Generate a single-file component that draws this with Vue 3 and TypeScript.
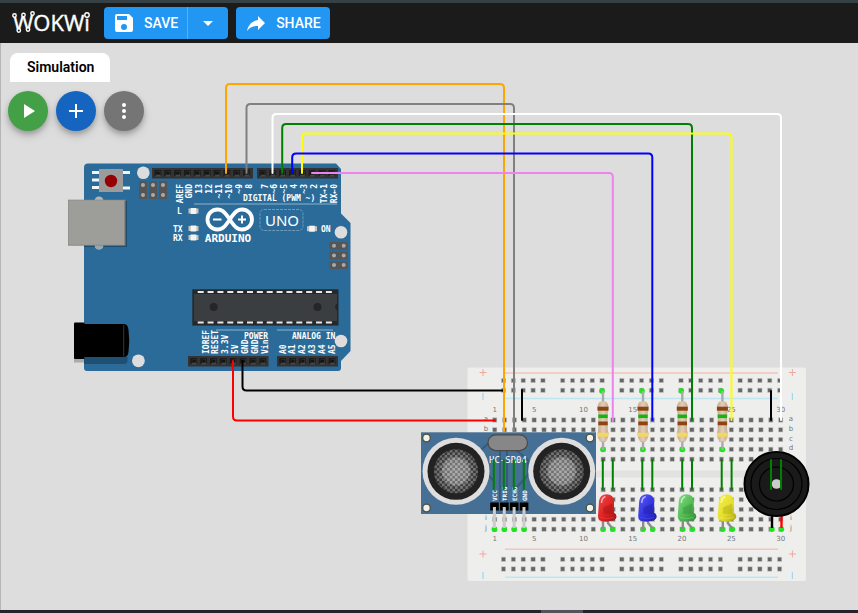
<script setup lang="ts">
type Point = [number, number]

interface Wire {
  color: string
  points: Point[]
}

interface PinLabel {
  text: string
  x: number
}

interface Led {
  id: string
  x: number
  light: string
  base: string
  dark: string
}

const PITCH = 9.86

const steps = (start: number, count: number, pitch: number = PITCH): number[] =>
  Array.from({ length: count }, (_, i) => start + i * pitch)

const labels = (names: string[], start: number): PinLabel[] =>
  names.map((text, i) => ({ text, x: start + i * PITCH }))

/** Polyline with softened corners. */
function wirePath(points: Point[], r = 4): string {
  let d = `M${points[0][0]} ${points[0][1]}`
  for (let i = 1; i < points.length - 1; i++) {
    const [px, py] = points[i - 1]
    const [x, y] = points[i]
    const [nx, ny] = points[i + 1]
    const ax = x - Math.sign(x - px) * r
    const ay = y - Math.sign(y - py) * r
    const bx = x + Math.sign(nx - x) * r
    const by = y + Math.sign(ny - y) * r
    d += `L${ax} ${ay}Q${x} ${y} ${bx} ${by}`
  }
  const last = points[points.length - 1]
  return `${d}L${last[0]} ${last[1]}`
}

const wires: Wire[] = [
  { color: '#000000', points: [[242.5, 361], [242.5, 390.5], [504, 390.5]] },
  { color: '#ff0000', points: [[233, 361], [233, 420.5], [495, 420.5]] },
  { color: '#ffa500', points: [[226, 173], [226, 84], [504, 84], [504, 431]] },
  { color: '#808080', points: [[246.5, 173], [246.5, 104], [514, 104], [514, 431]] },
  { color: '#ffffff', points: [[272.5, 173], [272.5, 114], [781, 114], [781, 420]] },
  { color: '#008000', points: [[282.2, 173], [282.2, 124], [692, 124], [692, 420]] },
  { color: '#ffff00', points: [[302, 173], [302, 133.5], [731.5, 133.5], [731.5, 420]] },
  { color: '#0000ff', points: [[292.2, 173], [292.2, 153.5], [652.3, 153.5], [652.3, 420]] },
  { color: '#ee82ee', points: [[312, 173], [612.8, 173], [612.8, 421]] },
  { color: '#000000', points: [[522, 390], [522, 420]] },
  { color: '#000000', points: [[771, 391], [771, 420]] },
]

const jumpers: number[] = [493.8, 503.8, 513.8, 523.8, 602.8, 612.8, 642.3, 652.3, 682.2, 692, 721.7, 731.6, 771, 781]

const topLabelsLeft = labels(['AREF', 'GND', '13', '12', '~11', '~10', '~9', '8'], 179.5)
const topLabelsRight = labels(['7', '~6', '~5', '4', '~3', '2', 'TX→1', 'RX←0'], 264.5)
const powerLabels = labels(['IOREF', 'RESET', '3.3V', '5V', 'GND', 'GND', 'Vin'], 205.5)
const analogLabels = labels(['A0', 'A1', 'A2', 'A3', 'A4', 'A5'], 282.5)

const headers = [
  { x: 152, y: 168, width: 101, pins: steps(157.8, 10) },
  { x: 257, y: 168, width: 81, pins: steps(262.8, 8) },
  { x: 188, y: 356, width: 80.5, pins: steps(193.7, 8) },
  { x: 277, y: 356, width: 61, pins: steps(282.7, 6) },
]

const boardLeds: Point[] = [[193.5, 211], [193.5, 228.5], [193.5, 237.5], [312, 228.7]]

const columns = steps(494.7, 30)
const rowYs = [420, 429.8, 439.5, 449.3, 459.2, 489.7, 499.6, 509.4, 519.3, 529.2]
const railYs = [380.5, 390.3, 559.3, 569]
const railXs = steps(503.5, 5, PITCH * 6).flatMap((x) => steps(x, 5))
const columnNumbers = [1, 5, 10, 15, 20, 25, 30]
const rowLetters = ['a', 'b', 'c', 'd', 'e', 'f', 'g', 'h', 'i', 'j']

const resistors: number[] = [603, 643, 682.3, 722.4]

const leds: Led[] = [
  { id: 'red', x: 598, light: '#f04a4a', base: '#dc2222', dark: '#9d1414' },
  { id: 'blue', x: 638.2, light: '#5a5af5', base: '#3333e0', dark: '#1d1d9c' },
  { id: 'green', x: 677.8, light: '#7fdc7f', base: '#53b953', dark: '#32893a' },
  { id: 'yellow', x: 717.8, light: '#f6f24e', base: '#e3dd2c', dark: '#a9a414' },
]

const sonars: number[] = [456, 561.7]
const sonarPins = ['VCC', 'TRIG', 'ECHO', 'GND'].map((text, i) => ({ text, x: 494.4 + i * PITCH }))
</script>

<template>
  <div class="app">
    <header class="bar">
      <a class="logo" href="#" aria-label="Wokwi">
        <svg width="84" height="32" viewBox="0 0 84 32">
          <text class="logo-text" x="1" y="24">WOKWi</text>
          <g class="logo-node">
            <circle cx="2.500" cy="8.500" r="1.700" />
            <circle cx="11.500" cy="8" r="1.700" />
            <circle cx="20.500" cy="6.500" r="1.700" />
            <circle cx="6.800" cy="23.500" r="1.700" />
            <circle cx="16" cy="22.500" r="1.700" />
            <circle cx="75" cy="8" r="2.200" />
          </g>
        </svg>
      </a>
      <div class="split">
        <button type="button" class="btn save">
          <svg class="icon" viewBox="0 0 24 24">
            <path d="M17 3H5a2 2 0 0 0-2 2v14a2 2 0 0 0 2 2h14a2 2 0 0 0 2-2V7l-4-4zm-5 16a3 3 0 1 1 0-6 3 3 0 0 1 0 6zm3-10H5V5h10v4z" />
          </svg>
          SAVE
        </button>
        <button type="button" class="btn drop" aria-label="Save options">
          <svg class="icon" viewBox="0 0 24 24"><path d="M7 10l5 5 5-5z" /></svg>
        </button>
      </div>
      <button type="button" class="btn share">
        <svg class="icon" viewBox="0 0 24 24">
          <path d="M14 9V5l7 7-7 7v-4.100c-5 0-8.500 1.600-11 5.100 1-5 4-10 11-11z" />
        </svg>
        SHARE
      </button>
    </header>

    <main class="canvas">
      <svg class="diagram">
        <defs>
          <linearGradient id="resistor" x1="0" x2="1" y1="0" y2="0">
            <stop offset="0" stop-color="#c4a98f" />
            <stop offset="0.500" stop-color="#e4cdb8" />
            <stop offset="1" stop-color="#c4a98f" />
          </linearGradient>
          <pattern id="mesh" width="5.200" height="5.200" patternUnits="userSpaceOnUse">
            <rect width="5.200" height="5.200" fill="#444" />
            <rect width="2.600" height="2.600" fill="#8c8c8c" />
            <rect x="2.600" y="2.600" width="2.600" height="2.600" fill="#8c8c8c" />
          </pattern>
          <radialGradient id="mesh-glow">
            <stop offset="0" stop-color="#fff" stop-opacity="0.300" />
            <stop offset="0.620" stop-color="#fff" stop-opacity="0.200" />
            <stop offset="0.680" stop-color="#000" stop-opacity="0.080" />
            <stop offset="1" stop-color="#000" stop-opacity="0.250" />
          </radialGradient>
          <linearGradient v-for="led in leds" :id="`led-${led.id}`" :key="led.id" x1="0" x2="1" y1="0" y2="1">
            <stop offset="0" :stop-color="led.light" />
            <stop offset="0.550" :stop-color="led.base" />
            <stop offset="1" :stop-color="led.dark" />
          </linearGradient>
        </defs>

        <g transform="translate(0 -43)">
          <!-- Arduino Uno -->
          <g>
            <path
              d="M88 163.500H336L341 169V213.500L350.500 223V351L341 361V368Q341 371 338 371H87Q84 371 84 368V167.500Q84 163.500 88 163.500Z"
              fill="#2b6b99"
            />
            <g fill="#ddd">
              <circle cx="143.300" cy="172.800" r="6.300" />
              <circle cx="341" cy="232.300" r="6.300" />
              <circle cx="341" cy="341" r="6.300" />
              <circle cx="138.400" cy="360.800" r="6.400" />
            </g>
            <!-- USB socket -->
            <circle cx="99" cy="201" r="4.500" fill="#b5b5b5" />
            <circle cx="99" cy="245" r="4.500" fill="#b5b5b5" />
            <rect x="84" y="201" width="43" height="46" fill="#1e4c6e" />
            <circle cx="99" cy="245" r="4.500" fill="#9aa7b0" />
            <rect x="68" y="199.700" width="57.500" height="46" fill="#858583" />
            <rect x="68.500" y="200.300" width="55.500" height="44.500" fill="#9d9d9a" />
            <!-- Power jack -->
            <rect x="74" y="358" width="10" height="4.500" fill="#aaa" />
            <path d="M84 357H127.500V361Q127 364 124 364H84Z" fill="#1f4f73" />
            <rect x="74" y="322.500" width="10.500" height="36.500" rx="1" />
            <path d="M84 324H124Q128 324 128.500 330Q130 341 128.500 352Q128 357 124 357H84Z" />
            <path d="M123.700 325V356.500" stroke="#444" stroke-width="0.800" />
            <!-- Reset button -->
            <g fill="#f4f4f4">
              <rect x="92" y="171" width="7" height="3" />
              <rect x="92" y="178.500" width="7" height="3" />
              <rect x="92" y="186" width="7" height="3" />
              <rect x="123" y="171" width="7" height="3" />
              <rect x="123" y="186.500" width="7" height="3" />
            </g>
            <rect x="99" y="169" width="24" height="23" fill="#9b9b9b" />
            <circle cx="111" cy="181" r="6.200" fill="#960000" />
            <!-- ICSP headers -->
            <template v-for="x in [139, 149, 159]" :key="`icsp-${x}`">
              <rect :x="x" y="181" width="8" height="18" fill="#555" />
              <circle :cx="x + 4" cy="185" r="2" fill="#aaa" />
              <circle :cx="x + 4" cy="195" r="2" fill="#aaa" />
            </template>
            <template v-for="y in [242, 251.7, 261.4]" :key="`isp-${y}`">
              <rect x="329.700" :y="y" width="18" height="7.500" fill="#555" />
              <circle cx="334" :cy="y + 3.7" r="2" fill="#aaa" />
              <circle cx="343.700" :cy="y + 3.7" r="2" fill="#aaa" />
            </template>
            <!-- Pin headers -->
            <template v-for="(h, i) in headers" :key="`header-${i}`">
              <rect :x="h.x" :y="h.y" :width="h.width" height="10.500" fill="#333" />
              <template v-for="x in h.pins" :key="x">
                <rect :x="x - 3.4" :y="h.y + 2" width="6.800" height="6.800" fill="#1c1c1c" />
                <path :d="`M${x - 3.4} ${h.y + 8.8}L${x - 1} ${h.y + 6.4}V${h.y + 3}H${x + 2.4}V${h.y + 6.4}L${x + 3.4} ${h.y + 8.8}Z`" fill="#464646" />
                <rect :x="x - 1.2" :y="h.y + 3.4" width="3.200" height="3.200" fill="#141414" />
              </template>
            </template>
            <!-- Status lights -->
            <g v-for="([x, y], i) in boardLeds" :key="`status-${i}`">
              <rect :x="x - 5" :y="y - 2.5" width="10" height="5" fill="#c5c1bb" />
              <rect :x="x - 2.8" :y="y - 3" width="5.600" height="6" fill="#f4f4f4" />
            </g>
            <!-- Microcontroller -->
            <rect x="192.300" y="289.300" width="146.200" height="36.300" fill="#26292c" />
            <rect x="194" y="294" width="143" height="27" fill="#3b3e41" />
            <template v-for="x in steps(197.700, 14)" :key="`pad-${x}`">
              <rect :x="x" y="291" width="6" height="2" fill="#e8e8e8" />
              <rect :x="x" y="321.500" width="6" height="2" fill="#e8e8e8" />
            </template>
            <circle cx="213.700" cy="307" r="4" fill="#232527" />
            <circle cx="317.500" cy="307" r="4" fill="#232527" />
            <path d="M337.500 303A4.500 4.500 0 0 0 337.500 311Z" fill="#232527" />
            <!-- Silkscreen -->
            <path
              d="M194 204H337M216 330H266M277 330H333"
              stroke="#8fb3cc"
              stroke-width="1"
            />
            <path
              d="M229.800 219.500C224 210.500 221 209.500 217.500 209.500A10 10 0 0 0 217.500 229.500C221 229.500 224 228.500 229.800 219.500C235.500 210.500 238.500 209.500 242 209.500A10 10 0 0 1 242 229.500C238.500 229.500 235.500 228.500 229.800 219.500Z"
              fill="none"
              stroke="#fff"
              stroke-width="3.800"
            />
            <path d="M213 219.500H221.500M238 219.500H246M242 215.500V223.500" stroke="#fff" stroke-width="2" />
            <rect x="260" y="209.500" width="43" height="21" rx="4" fill="none" stroke="#6d9abb" stroke-dasharray="3 1" />
            <text class="uno" x="282" y="226">UNO</text>
            <text class="brand" x="228" y="242">ARDUINO</text>
            <g class="silk">
              <text x="243" y="201">DIGITAL (PWM ~)</text>
              <text x="177" y="214">L</text>
              <text x="173" y="232">TX</text>
              <text x="173" y="241">RX</text>
              <text x="321" y="232">ON</text>
              <text x="244" y="339">POWER</text>
              <text x="292" y="339">ANALOG IN</text>
              <text
                v-for="p in [...topLabelsLeft, ...topLabelsRight]"
                :key="`top-${p.x}`"
                text-anchor="end"
                :transform="`translate(${p.x + 3} 184) rotate(-90)`"
              >{{ p.text }}</text>
              <text
                v-for="p in [...powerLabels, ...analogLabels]"
                :key="`bottom-${p.x}`"
                :transform="`translate(${p.x + 3} 354) rotate(-90)`"
              >{{ p.text }}</text>
            </g>
          </g>

          <!-- Breadboard -->
          <g>
            <rect x="467.500" y="367.500" width="338.500" height="213.500" rx="2" fill="#eeeeec" />
            <rect x="467.500" y="470.500" width="338.500" height="7" fill="#e2e2e2" />
            <path d="M505 373H778M505 549.300H778" stroke="#f5c4bb" stroke-width="1.600" />
            <path d="M505 398.500H778M505 577.200H778" stroke="#bde5f2" stroke-width="1.600" />
            <g stroke="#f2a79c" stroke-width="1">
              <path
                v-for="([x, y], i) in [[483, 372.5], [792.4, 372.5], [483, 554], [792.4, 554]]"
                :key="`plus-${i}`"
                :d="`M${x - 3.5} ${y}h7M${x} ${y - 3.5}v7`"
              />
            </g>
            <path d="M483 393v7M792.400 393v7M483 572v7M792.400 572v7" stroke="#9ed8ee" stroke-width="1.200" />
            <g class="hole">
              <template v-for="y in railYs" :key="`rail-${y}`">
                <rect v-for="x in railXs" :key="x" :x="x - 2.2" :y="y - 2.2" width="4.400" height="4.400" />
              </template>
              <template v-for="y in rowYs" :key="`row-${y}`">
                <rect v-for="x in columns" :key="x" :x="x - 2.2" :y="y - 2.2" width="4.400" height="4.400" />
              </template>
            </g>
            <g class="mark">
              <template v-for="n in columnNumbers" :key="`col-${n}`">
                <text :x="columns[n - 1]" y="412">{{ n }}</text>
                <text :x="columns[n - 1]" y="541">{{ n }}</text>
              </template>
              <template v-for="(letter, i) in rowLetters" :key="`letter-${letter}`">
                <text x="486" :y="rowYs[i] + 1">{{ letter }}</text>
                <text x="791" :y="rowYs[i] + 1">{{ letter }}</text>
              </template>
            </g>
          </g>

          <!-- Resistors -->
          <g v-for="x in resistors" :key="`resistor-${x}`">
            <circle :cx="x - 1" cy="391" r="2.800" fill="#1fe51f" />
            <circle :cx="x" cy="449.500" r="2.800" fill="#1fe51f" />
            <path :d="`M${x} 391V450`" stroke="#aaa" stroke-width="2.400" />
            <path
              :d="`M${x - 3} 401.500h6q2.500 2 2.500 6.500q-.8 3-.8 7v13q0 3 .8 5q0 5-2.500 8.500h-6q-2.500-3.500-2.500-8.500q.8-2 .8-5v-13q0-4-.8-7q0-4.500 2.500-6.500z`"
              fill="url(#resistor)"
            />
            <rect :x="x - 5.5" y="406.700" width="11" height="4" fill="#8b4513" />
            <rect :x="x - 4.7" y="414.500" width="9.400" height="3.600" fill="#0fb80f" />
            <rect :x="x - 4.7" y="421.500" width="9.400" height="3.800" fill="#8b4513" />
            <rect :x="x - 5.5" y="432.700" width="11" height="4" fill="#f1d863" />
          </g>

          <!-- LEDs -->
          <g v-for="led in leds" :key="`body-${led.id}`">
            <circle :cx="led.x + 5" cy="529.300" r="2.700" fill="#1fe51f" />
            <circle :cx="led.x + 14.6" cy="529.300" r="2.700" fill="#1fe51f" />
            <path
              :d="`M${led.x + 5} 518V529M${led.x + 10} 518V523L${led.x + 14.5} 528.500`"
              fill="none"
              stroke="#8c8c8c"
              stroke-width="2.400"
            />
            <path
              :d="`M${led.x + 1} 501q1-6.700 7.700-6.700t7.300 6.700v11.500q2.500 1.500 2.500 4t-3.500 4q-7 2.300-13.200 0q-2-1-1.800-5z`"
              :fill="`url(#led-${led.id})`"
            />
            <path :d="`M${led.x + 3.5} 503q.3-5.500 4-6.500`" fill="none" stroke="#fff" stroke-width="1.500" opacity="0.600" />
            <path
              :d="`M${led.x + 5.5} 513.500V507.500L${led.x + 14} 504V513.500H${led.x + 10}ZM${led.x + 6} 513L${led.x + 14} 506`"
              :fill="led.dark"
              :stroke="led.dark"
              stroke-width="0.600"
              opacity="0.400"
            />
            <path :d="`M${led.x + 2} 517.500q6 2.500 14 0`" fill="none" :stroke="led.light" stroke-width="1" opacity="0.500" />
          </g>

          <!-- Buzzer -->
          <g>
            <circle cx="772" cy="529.300" r="2.700" fill="#1fe51f" />
            <circle cx="781.500" cy="529.300" r="2.700" fill="#1fe51f" />
            <path d="M772 514V528" stroke="#000" stroke-width="2.400" />
            <path d="M781.500 514V528" stroke="#f00" stroke-width="2.400" />
            <circle cx="776.500" cy="484" r="32" fill="#1a1a1a" stroke="#000" stroke-width="2" />
            <g fill="none" stroke="#000" stroke-width="1.200">
              <circle cx="776.500" cy="484" r="25.500" />
              <circle cx="776.500" cy="484" r="17" />
            </g>
            <circle cx="776.500" cy="484" r="4.800" fill="#ccc" />
          </g>

          <!-- Ultrasonic sensor -->
          <g>
            <rect x="421" y="432.300" width="175" height="81.700" fill="#456f94" />
            <path
              d="M490 442L481 450V468L494 481M500 450V502M507 450V502M516 450L528 460V475L516 488V502"
              fill="none"
              stroke="#355b80"
              stroke-width="2"
            />
            <circle
              v-for="([x, y], i) in [[426.5, 438], [590, 438], [426.5, 508], [590, 508]]"
              :key="`mount-${i}`"
              :cx="x"
              :cy="y"
              r="3.800"
              fill="#f0f0f0"
              stroke="#505038"
              stroke-width="1.300"
            />
            <g v-for="x in sonars" :key="`sonar-${x}`">
              <circle :cx="x" cy="471.300" r="33.500" fill="#dedede" />
              <circle :cx="x" cy="471.300" r="28.500" fill="#222" />
              <circle :cx="x" cy="471.300" r="22" fill="url(#mesh)" />
              <circle :cx="x" cy="471.300" r="22" fill="url(#mesh-glow)" />
            </g>
            <rect x="488" y="434.800" width="39.500" height="15.800" rx="7.900" fill="#878787" stroke="#484848" stroke-width="1.200" />
            <text class="sensor-name" x="508" y="463">HC-SR04</text>
            <g v-for="p in sonarPins" :key="`sonar-pin-${p.text}`">
              <text class="sensor-pin" :transform="`translate(${p.x + 3} 501) rotate(-90)`">{{ p.text }}</text>
              <rect :x="p.x - 4.2" y="502.500" width="8.600" height="8" />
              <circle :cx="p.x" cy="529.300" r="2.800" fill="#1fe51f" />
              <path :d="`M${p.x} 507V528`" stroke="#ccc" stroke-width="3" />
            </g>
          </g>

          <!-- Wires -->
          <g fill="none" stroke-width="2" stroke-linecap="round">
            <path v-for="(wire, i) in wires" :key="`wire-${i}`" :d="wirePath(wire.points)" :stroke="wire.color" />
            <path v-for="x in jumpers" :key="`jumper-${x}`" :d="`M${x} 460V489`" stroke="#008000" />
          </g>
        </g>
      </svg>

      <section class="simulation" aria-label="Simulation controls">
        <h2 class="tab">Simulation</h2>
        <div class="actions">
          <button type="button" class="fab play" aria-label="Start the simulation">
            <svg class="icon" viewBox="0 0 24 24"><path d="M8 5v14l11-7z" /></svg>
          </button>
          <button type="button" class="fab add" aria-label="Add a new part">
            <svg class="icon" viewBox="0 0 24 24"><path d="M19 13h-6v6h-2v-6H5v-2h6V5h2v6h6z" /></svg>
          </button>
          <button type="button" class="fab more" aria-label="More options">
            <svg class="icon" viewBox="0 0 24 24">
              <circle cx="12" cy="6" r="2" /><circle cx="12" cy="12" r="2" /><circle cx="12" cy="18" r="2" />
            </svg>
          </button>
        </div>
      </section>
    </main>

    <footer class="strip"><span class="thumb"></span></footer>
  </div>
</template>

<style>
body {
  margin: 0;
}
</style>

<style scoped>
.app {
  display: flex;
  flex-direction: column;
  height: 100vh;
  overflow: hidden;
  font-family: Roboto, 'Liberation Sans', sans-serif;
}

.bar {
  display: flex;
  align-items: center;
  gap: 8px;
  box-sizing: border-box;
  height: 43px;
  padding: 0 12px;
  border-top: 3px solid #364145;
  background: #1b1b1b;
}

.logo {
  display: flex;
  height: 32px;
}

.logo-text {
  fill: #fff;
  stroke: #fff;
  stroke-width: 0.4px;
  font-family: 'Open Sans', sans-serif;
  font-size: 22px;
}

.logo-node {
  fill: #1b1b1b;
  stroke: #fff;
  stroke-width: 1.4px;
}

.icon {
  width: 24px;
  height: 24px;
  fill: currentColor;
}

.split {
  display: flex;
}

.btn {
  display: flex;
  align-items: center;
  height: 32px;
  padding: 0 9px 0 8px;
  border: 0;
  border-radius: 4px;
  background: #2196f3;
  color: #fff;
  font: 500 14px Roboto, sans-serif;
  gap: 8px;
  cursor: pointer;
}

.save {
  border-right: 1px solid #58b0f6;
  border-radius: 4px 0 0 4px;
}

.drop {
  padding: 0 8px;
  border-radius: 0 4px 4px 0;
}

.canvas {
  position: relative;
  flex: 1;
  min-height: 0;
  border-left: 1px solid #b5b5b5;
  background: #ddd;
}

.diagram {
  position: absolute;
  inset: 0 0 0 -1px;
  width: 100%;
  height: 100%;
}

.simulation {
  position: relative;
  display: inline-flex;
  flex-direction: column;
  gap: 9px;
  padding: 10px 7px;
}

.tab {
  align-self: flex-start;
  margin: 0 2px;
  padding: 0 16px 0 17px;
  border-radius: 8px 8px 0 0;
  background: #fff;
  color: #000;
  font-size: 14px;
  font-weight: 600;
  line-height: 29px;
}

.actions {
  display: flex;
  gap: 8px;
}

.fab {
  display: grid;
  place-items: center;
  width: 40px;
  height: 40px;
  padding: 0;
  border: 0;
  border-radius: 50%;
  color: #fff;
  box-shadow: 0 3px 5px rgba(0, 0, 0, 0.2), 0 5px 10px rgba(0, 0, 0, 0.14);
  cursor: pointer;
}

.play {
  background: #43a047;
}

.add {
  background: #1565c0;
}

.more {
  background: #757575;
}

.strip {
  display: flex;
  height: 3px;
  background: #26212b;
}

.thumb {
  width: 5%;
  margin-left: 63%;
  background: #57525a;
}

.silk {
  fill: #fff;
  font-family: 'DejaVu Sans Mono', monospace;
  font-size: 8px;
  font-weight: bold;
}

.brand {
  fill: #fff;
  font-family: 'DejaVu Sans Mono', monospace;
  font-size: 11px;
  font-weight: bold;
  text-anchor: middle;
}

.uno {
  fill: #fff;
  font-family: 'Noto Sans', sans-serif;
  font-size: 15px;
  text-anchor: middle;
}

.hole {
  fill: #666;
  stroke: #ccc;
  stroke-width: 0.6px;
}

.mark {
  fill: #777;
  font-family: 'DejaVu Sans', sans-serif;
  font-size: 7px;
  text-anchor: middle;
}

.sensor-name {
  fill: #fff;
  font-family: 'DejaVu Sans Mono', monospace;
  font-size: 9px;
  text-anchor: middle;
}

.sensor-pin {
  fill: #fff;
  font-family: 'DejaVu Sans Mono', monospace;
  font-size: 6px;
  font-weight: bold;
}
</style>
